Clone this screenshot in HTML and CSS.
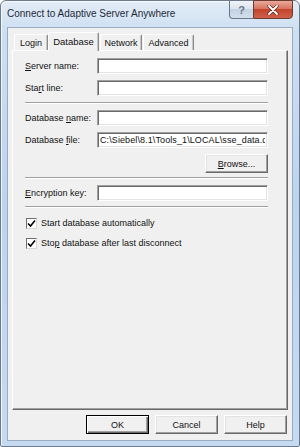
FILE: index.html
```html
<!DOCTYPE html>
<html>
<head>
  <title>Connect to Adaptive Server Anywhere</title>
  <link rel="stylesheet" href="styles.css">
</head>
<body>

  <div class="window">
    <div class="titlebar">
      <span class="title">Connect to Adaptive Server Anywhere</span>
      <div class="caption">
        <span class="cap help">?</span>
        <span class="cap close">
          <svg width="14" height="10" viewBox="0 0 14 10">
            <path d="M3 1 L11 9 M11 1 L3 9" stroke="#5a2a22" stroke-width="3.2" stroke-linecap="round"/>
            <path d="M3 1 L11 9 M11 1 L3 9" stroke="#ffffff" stroke-width="1.8" stroke-linecap="round"/>
          </svg>
        </span>
      </div>
    </div>

    <div class="client">
      <div class="tabs">
        <div class="tab tab-login">Login</div>
        <div class="tab tab-db active">Database</div>
        <div class="tab tab-net">Network</div>
        <div class="tab tab-adv">Advanced</div>
      </div>

      <div class="panel">
        <div class="row">
          <label><u>S</u>erver name:</label>
          <input type="text" class="field">
        </div>
        <div class="row">
          <label>Sta<u>r</u>t line:</label>
          <input type="text" class="field">
        </div>

        <div class="sep"></div>

        <div class="row">
          <label>Database <u>n</u>ame:</label>
          <input type="text" class="field">
        </div>
        <div class="row">
          <label>Database <u>f</u>ile:</label>
          <input type="text" class="field" value="C:\Siebel\8.1\Tools_1\LOCAL\sse_data.dbf" readonly>
        </div>
        <div class="browse-row">
          <button class="btn browse"><u>B</u>rowse...</button>
        </div>

        <div class="sep sep-2"></div>

        <div class="row">
          <label><u>E</u>ncryption key:</label>
          <input type="text" class="field">
        </div>

        <div class="sep sep-3"></div>

        <div class="check">
          <span class="box">
            <svg width="9" height="9" viewBox="0 0 9 9"><path d="M1 4.5 L3.5 7 L8 1.5" fill="none" stroke="#000" stroke-width="1.6"/></svg>
          </span>
          <span>Start database automatically</span>
        </div>
        <div class="check">
          <span class="box">
            <svg width="9" height="9" viewBox="0 0 9 9"><path d="M1 4.5 L3.5 7 L8 1.5" fill="none" stroke="#000" stroke-width="1.6"/></svg>
          </span>
          <span>Sto<u>p</u> database after last disconnect</span>
        </div>
      </div>

      <div class="buttons">
        <button class="btn default">OK</button>
        <button class="btn">Cancel</button>
        <button class="btn">Help</button>
      </div>
    </div>
  </div>

</body>
</html>
```

FILE: styles.css
```css
* {
  box-sizing: border-box;
}

body {
  margin: 0;
  font-family: "Liberation Sans", Arial, sans-serif;
  font-size: 9px;
  color: #111;
  background: #fff;
}

.window {
  width: 300px;
  height: 447px;
  border: 1px solid #6b7a8c;
  border-radius: 6px 6px 2px 2px;
  background: linear-gradient(to bottom, #e3ecf7 0, #cddff2 30px, #bcd4ee 200px, #c6dbf1 447px);
  box-shadow: inset 1px 1px 0 rgba(255, 255, 255, 0.7);
  display: flex;
  flex-direction: column;
}

.titlebar {
  height: 26px;
  display: flex;
  justify-content: space-between;
  align-items: flex-start;
}

.title {
  margin: 7px 0 0 6px;
  font-size: 10px;
  color: #1e2a38;
}

.caption {
  display: flex;
  margin-right: 6px;
  margin-top: -1px;
}

.cap {
  height: 19px;
  display: flex;
  align-items: center;
  justify-content: center;
  border: 1px solid #6a788a;
}

.help {
  width: 24px;
  border-right: none;
  border-radius: 0 0 0 4px;
  background: linear-gradient(to bottom, #f0f4f9 0, #dbe4ef 45%, #c4d2e2 50%, #d2deeb 100%);
  color: #6b7784;
  font-size: 11px;
  font-weight: bold;
}

.close {
  width: 40px;
  border-color: #6b3a30;
  border-radius: 0 0 4px 0;
  background: linear-gradient(to bottom, #e9a99b 0, #d77560 45%, #c4432b 50%, #d0614a 100%);
}

.client {
  margin: 0 6px;
  height: 414px;
  border: 1px solid #98abc1;
  background: #f0f0f0;
  display: flex;
  flex-direction: column;
}

.tabs {
  display: flex;
  height: 22px;
  padding: 4px 0 0 6px;
  align-items: flex-end;
}

.tab {
  height: 16px;
  display: flex;
  align-items: center;
  justify-content: center;
  background: #f0f0f0;
  border-top: 1px solid #fff;
  border-left: 1px solid #fff;
  border-right: 1px solid #8a8a8a;
  border-radius: 2px 2px 0 0;
  box-shadow: inset -1px 0 0 #c8c8c8;
}

.tab-login { width: 34px; }
.tab-db { width: 51px; }
.tab-net { width: 42px; margin-left: 1px; }
.tab-adv { width: 51px; margin-left: 1px; }

.tab.active {
  height: 19px;
  margin-bottom: -1px;
  padding-bottom: 1px;
  position: relative;
  z-index: 1;
  font-size: 9.5px;
}

.panel {
  margin: 0 4px;
  height: 360px;
  border-top: 1px solid #fff;
  border-left: 1px solid #fff;
  border-right: 1px solid #696969;
  border-bottom: 1px solid #696969;
  box-shadow: inset -1px -1px 0 #a0a0a0;
  padding: 7px 19px 0 12px;
}

.row {
  display: flex;
  align-items: center;
  height: 16px;
  margin-bottom: 6px;
}

.row label {
  width: 72px;
}

.field {
  width: 171px;
  height: 16px;
  margin: 0;
  padding: 0 2px;
  font-family: "Liberation Sans", Arial, sans-serif;
  font-size: 9px;
  letter-spacing: 0.1px;
  color: #111;
  background: #fff;
  border-top: 1px solid #a0a0a0;
  border-left: 1px solid #a0a0a0;
  border-right: 1px solid #fff;
  border-bottom: 1px solid #fff;
  box-shadow: inset 1px 1px 0 #696969, inset -1px -1px 0 #e3e3e3;
  outline: none;
}

.sep {
  height: 2px;
  border-top: 1px solid #a0a0a0;
  border-bottom: 1px solid #fff;
  margin-bottom: 6px;
}

.sep-2 {
  margin-top: 4px;
}

.sep-3 {
  margin-top: -1px;
  margin-bottom: 8px;
}

.browse-row {
  display: flex;
  justify-content: flex-end;
  margin-top: 1px;
}

.btn {
  height: 19px;
  width: 63px;
  margin: 0;
  padding: 0;
  font-family: "Liberation Sans", Arial, sans-serif;
  font-size: 9px;
  color: #111;
  background: #f0f0f0;
  border-top: 1px solid #fff;
  border-left: 1px solid #fff;
  border-right: 1px solid #696969;
  border-bottom: 1px solid #696969;
  box-shadow: inset -1px -1px 0 #a0a0a0, inset 1px 1px 0 #e3e3e3;
}

.browse {
  width: 63px;
}

.btn.default {
  border: 1px solid #000;
  box-shadow: inset 1px 1px 0 #fff, inset -1px -1px 0 #696969, inset -2px -2px 0 #a0a0a0;
}

.check {
  display: flex;
  align-items: center;
  height: 14px;
  margin: 0 0 6px 1px;
}

.box {
  width: 11px;
  height: 11px;
  margin-right: 4px;
  background: #fff;
  border-top: 1px solid #6e6e6e;
  border-left: 1px solid #6e6e6e;
  border-right: 1px solid #d8d8d8;
  border-bottom: 1px solid #d8d8d8;
  display: flex;
  align-items: center;
  justify-content: center;
}

.buttons {
  display: flex;
  justify-content: flex-end;
  gap: 6px;
  padding: 5px 5px 0 0;
}
```
